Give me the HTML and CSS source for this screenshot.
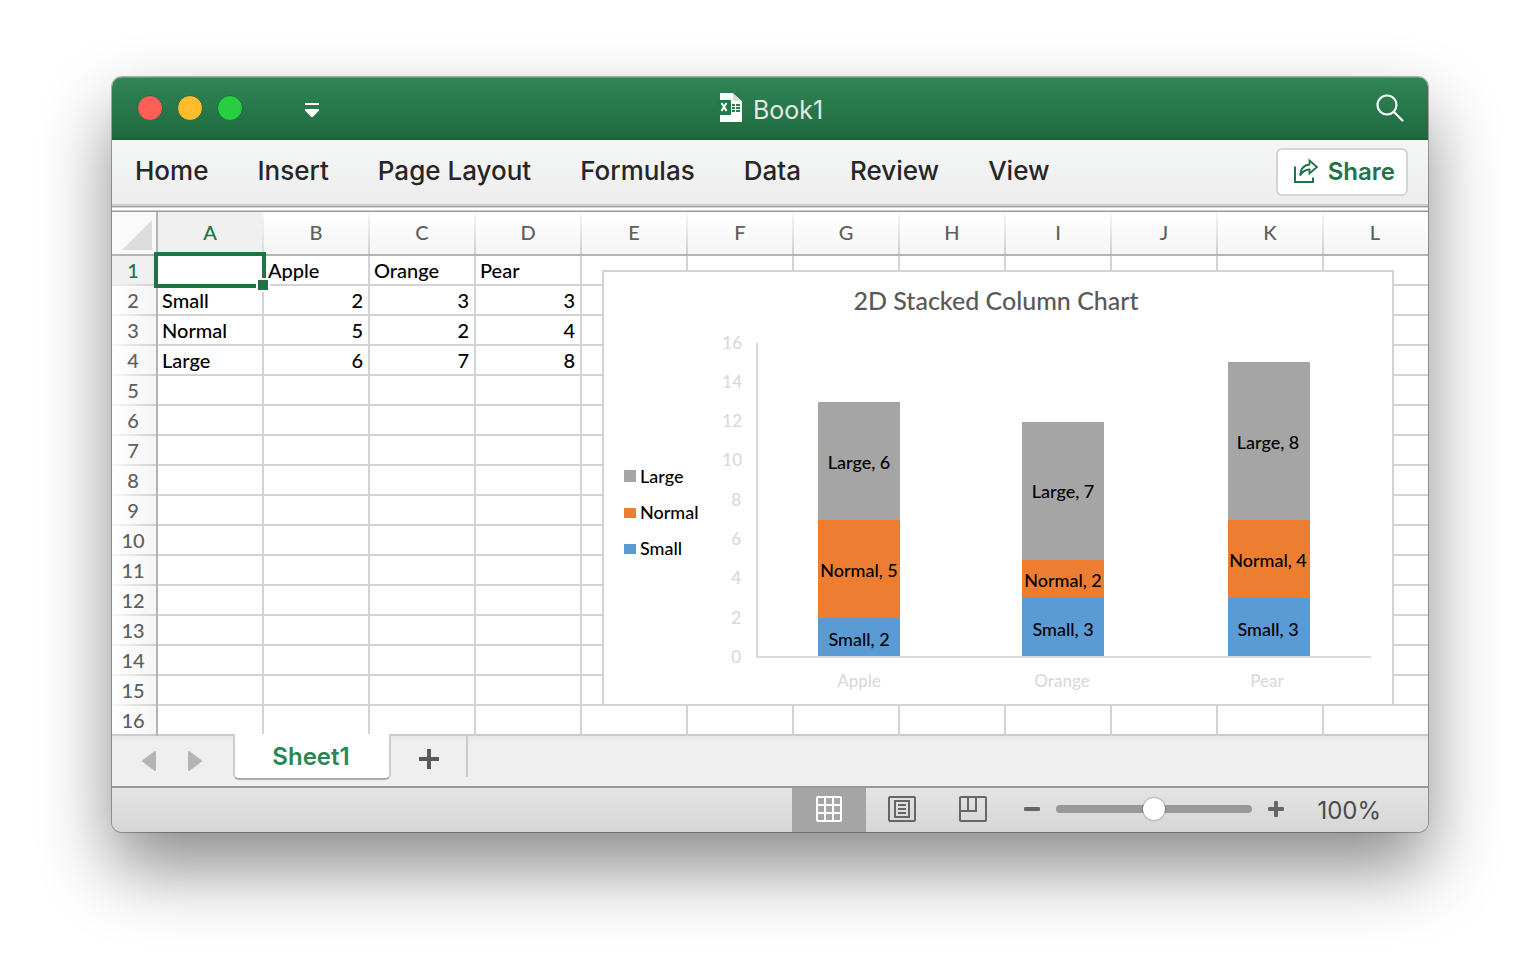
FILE: index.html
```html
<!DOCTYPE html>
<html lang="en">
<head>
<meta charset="utf-8">
<title>Book1</title>
<link rel="stylesheet" href="styles.css">
</head>
<body>
<main class="window">
  <header class="titlebar">
    <div class="titlebar-left">
      <div class="lights">
        <button class="light light-close" aria-label="Close"></button>
        <button class="light light-min" aria-label="Minimize"></button>
        <button class="light light-max" aria-label="Zoom window"></button>
      </div>
      <button class="plain customize" aria-label="Customize toolbar">
        <svg width="14" height="14" viewBox="0 0 14 14" fill="#fff"><path d="M0 0h14v2H0zM0 6h14v1.500L7.800 14h-1.600L0 7.500z"/></svg>
      </button>
    </div>
    <h1 class="doc-title">
      <svg class="doc-icon" width="26" height="30" viewBox="0 0 26 30">
        <path d="M3 0h13l9 8v21H3z" fill="#fff"/>
        <path d="M16 0v6q0 2 2 2h7z" fill="#d5ddd8"/>
        <path d="M16 0h9v8z" fill="#2a7a4c"/>
        <path d="M15 11h3v2h-3zM19 11h4v2h-4zM15 14h3v2h-3zM19 14h4v2h-4zM15 17h3v2h-3zM19 17h4v2h-4z" fill="#2b7c4d"/>
        <rect x="0" y="7" width="14" height="15" rx="1" fill="#1f7a48"/>
        <path d="M4.500 10l5 8M9.500 10l-5 8" stroke="#fff" stroke-width="2"/>
      </svg>
      Book1
    </h1>
    <button class="plain search" aria-label="Search">
      <svg width="28" height="28" viewBox="0 0 28 28" fill="none" stroke="#fff" stroke-width="2.200" stroke-linecap="round"><circle cx="11" cy="11" r="9.500"/><path d="M18 18l8.500 8.500"/></svg>
    </button>
  </header>

  <nav class="ribbon">
    <div class="ribbon-tabs">
      <button class="ribbon-tab">Home</button>
      <button class="ribbon-tab">Insert</button>
      <button class="ribbon-tab">Page Layout</button>
      <button class="ribbon-tab">Formulas</button>
      <button class="ribbon-tab">Data</button>
      <button class="ribbon-tab">Review</button>
      <button class="ribbon-tab">View</button>
    </div>
    <button class="share">
      <svg width="26" height="26" viewBox="0 0 26 26" fill="none" stroke="#217346" stroke-width="2"><path d="M2 8.500V24h18v-4.500"/><path d="M7 17.500C7.500 11 11 7 16.500 6.500V2.500L24 9l-7.500 6.500v-4C12 11.500 9.500 13.500 7 17.500z" stroke-width="1.800"/></svg>
      Share
    </button>
  </nav>
  <div class="rule"></div>

  <section class="sheet">
    <table class="grid">
      <colgroup><col class="col-head"><col class="col"><col class="col"><col class="col"><col class="col"><col class="col"><col class="col"><col class="col"><col class="col"><col class="col"><col class="col"><col class="col"><col></colgroup>
      <thead>
        <tr><th class="corner"><svg width="30" height="30" viewBox="0 0 30 30"><path d="M30 0v30H0z" fill="#dcdcdc"/></svg></th><th class="current">A</th><th>B</th><th>C</th><th>D</th><th>E</th><th>F</th><th>G</th><th>H</th><th>I</th><th>J</th><th>K</th><th>L</th></tr>
      </thead>
      <tbody>
        <tr><th class="current">1</th><td class="selected"><span class="selection"></span></td><td>Apple</td><td>Orange</td><td>Pear</td><td></td><td></td><td></td><td></td><td></td><td></td><td></td><td></td></tr>
        <tr><th>2</th><td>Small</td><td class="num">2</td><td class="num">3</td><td class="num">3</td><td></td><td></td><td></td><td></td><td></td><td></td><td></td><td></td></tr>
        <tr><th>3</th><td>Normal</td><td class="num">5</td><td class="num">2</td><td class="num">4</td><td></td><td></td><td></td><td></td><td></td><td></td><td></td><td></td></tr>
        <tr><th>4</th><td>Large</td><td class="num">6</td><td class="num">7</td><td class="num">8</td><td></td><td></td><td></td><td></td><td></td><td></td><td></td><td></td></tr>
        <tr><th>5</th><td></td><td></td><td></td><td></td><td></td><td></td><td></td><td></td><td></td><td></td><td></td><td></td></tr>
        <tr><th>6</th><td></td><td></td><td></td><td></td><td></td><td></td><td></td><td></td><td></td><td></td><td></td><td></td></tr>
        <tr><th>7</th><td></td><td></td><td></td><td></td><td></td><td></td><td></td><td></td><td></td><td></td><td></td><td></td></tr>
        <tr><th>8</th><td></td><td></td><td></td><td></td><td></td><td></td><td></td><td></td><td></td><td></td><td></td><td></td></tr>
        <tr><th>9</th><td></td><td></td><td></td><td></td><td></td><td></td><td></td><td></td><td></td><td></td><td></td><td></td></tr>
        <tr><th>10</th><td></td><td></td><td></td><td></td><td></td><td></td><td></td><td></td><td></td><td></td><td></td><td></td></tr>
        <tr><th>11</th><td></td><td></td><td></td><td></td><td></td><td></td><td></td><td></td><td></td><td></td><td></td><td></td></tr>
        <tr><th>12</th><td></td><td></td><td></td><td></td><td></td><td></td><td></td><td></td><td></td><td></td><td></td><td></td></tr>
        <tr><th>13</th><td></td><td></td><td></td><td></td><td></td><td></td><td></td><td></td><td></td><td></td><td></td><td></td></tr>
        <tr><th>14</th><td></td><td></td><td></td><td></td><td></td><td></td><td></td><td></td><td></td><td></td><td></td><td></td></tr>
        <tr><th>15</th><td></td><td></td><td></td><td></td><td></td><td></td><td></td><td></td><td></td><td></td><td></td><td></td></tr>
        <tr><th>16</th><td></td><td></td><td></td><td></td><td></td><td></td><td></td><td></td><td></td><td></td><td></td><td></td></tr>
      </tbody>
    </table>

    <svg class="chart" width="792" height="436" viewBox="0 0 792 436" role="img" aria-label="2D Stacked Column Chart">
      <rect x="1" y="1" width="790" height="434" fill="#fff" stroke="#d3d3d3" stroke-width="2"/>
      <text class="chart-title" x="394" y="40">2D Stacked Column Chart</text>
      <g class="ticks">
        <text x="140" y="79">16</text><text x="140" y="118">14</text><text x="140" y="157">12</text>
        <text x="140" y="196">10</text><text x="139" y="236">8</text><text x="139" y="275">6</text>
        <text x="139" y="314">4</text><text x="139" y="354">2</text><text x="139" y="393">0</text>
      </g>
      <path d="M155 73v314h614" fill="none" stroke="#d9d9d9" stroke-width="2"/>
      <g fill="#a5a5a5"><rect x="216" y="132" width="82" height="118"/><rect x="420" y="152" width="82" height="138"/><rect x="626" y="92" width="82" height="158"/><rect x="22" y="200" width="12" height="12"/></g>
      <g fill="#ed7d31"><rect x="216" y="250" width="82" height="98"/><rect x="420" y="290" width="82" height="38"/><rect x="626" y="250" width="82" height="78"/><rect x="22" y="238" width="12" height="10"/></g>
      <g fill="#5b9bd5"><rect x="216" y="348" width="82" height="38"/><rect x="420" y="328" width="82" height="58"/><rect x="626" y="328" width="82" height="58"/><rect x="22" y="274" width="12" height="10"/></g>
      <g class="legend">
        <text x="38" y="213">Large</text><text x="38" y="249">Normal</text><text x="38" y="285">Small</text>
      </g>
      <g class="labels">
        <text x="257" y="199">Large, 6</text><text x="257" y="307">Normal, 5</text><text x="257" y="376">Small, 2</text>
        <text x="461" y="228">Large, 7</text><text x="461" y="317">Normal, 2</text><text x="461" y="366">Small, 3</text>
        <text x="666" y="179">Large, 8</text><text x="666" y="297">Normal, 4</text><text x="666" y="366">Small, 3</text>
      </g>
      <g class="categories">
        <text x="257" y="417">Apple</text><text x="460" y="417">Orange</text><text x="665" y="417">Pear</text>
      </g>
    </svg>
  </section>

  <nav class="tabbar">
    <div class="tab-nav">
      <button class="plain" aria-label="Previous sheet"><svg width="14" height="20" viewBox="0 0 14 20"><path d="M13 1v18L1 10z" fill="#b4b4b4" stroke="#b4b4b4" stroke-width="2" stroke-linejoin="round"/></svg></button>
      <button class="plain" aria-label="Next sheet"><svg width="14" height="20" viewBox="0 0 14 20"><path d="M1 1v18l12-9z" fill="#b4b4b4" stroke="#b4b4b4" stroke-width="2" stroke-linejoin="round"/></svg></button>
    </div>
    <button class="sheet-tab">Sheet1</button>
    <button class="add-sheet" aria-label="Add sheet"><svg width="20" height="20" viewBox="0 0 20 20"><path d="M10 0v20M0 10h20" stroke="#5a5a5a" stroke-width="4"/></svg></button>
  </nav>

  <footer class="status">
    <button class="view view-active" aria-label="Normal view"><svg width="26" height="26" viewBox="0 0 26 26" fill="none" stroke="#fff" stroke-width="2"><rect x="1" y="1" width="24" height="24" rx="1"/><path d="M9 1v24M17 1v24M1 9h24M1 17h24"/></svg></button>
    <button class="view" aria-label="Page layout view"><svg width="28" height="26" viewBox="0 0 28 26" fill="none" stroke="#666" stroke-width="2"><rect x="1" y="1" width="26" height="24" rx="1"/><path d="M7 5h14v16H7zM10 9h8M10 13h8M10 17h8"/></svg></button>
    <button class="view" aria-label="Page break preview"><svg width="28" height="26" viewBox="0 0 28 26" fill="none" stroke="#666" stroke-width="2"><rect x="1" y="1" width="26" height="24" rx="1"/><path d="M9 1v14M17 1v14M1 15h17"/></svg></button>
    <div class="zoom">
      <button class="plain" aria-label="Zoom out"><svg width="16" height="16" viewBox="0 0 16 16"><rect y="6" width="16" height="4" rx="1" fill="#666"/></svg></button>
      <input class="slider" type="range" min="0" max="200" value="100" aria-label="Zoom">
      <button class="plain" aria-label="Zoom in"><svg width="16" height="16" viewBox="0 0 16 16" fill="#666"><rect y="6" width="16" height="4" rx="1"/><rect x="6" width="4" height="16" rx="1"/></svg></button>
    </div>
    <output class="zoom-value">100%</output>
  </footer>
</main>
</body>
</html>
```
FILE: styles.css
```css
* { box-sizing: border-box; }

body {
  min-height: 100vh;
  margin: 0;
  padding: 77px 112px 140px;
  background: #fff;
  font-family: Inter, "Liberation Sans", sans-serif;
}

button {
  margin: 0;
  padding: 0;
  border: 0;
  background: none;
  font: inherit;
  color: inherit;
}

svg { display: block; }

.plain { display: flex; }

.window {
  display: flex;
  flex-direction: column;
  overflow: hidden;
  border-radius: 10px;
  background: #fff;
  box-shadow: 0 0 0 1px rgba(0, 0, 0, .25), 0 0 2px rgba(0, 0, 0, .2), 0 36px 72px rgba(0, 0, 0, .46);
}

.titlebar {
  display: grid;
  grid-template-columns: 1fr auto 1fr;
  align-items: center;
  height: 63px;
  padding: 0 24px;
  background: linear-gradient(#308455, #1e6b3e);
  border-top: 1px solid #57a077;
  border-bottom: 2px solid #1b5f37;
}

.titlebar-left { display: flex; align-items: center; gap: 61px; padding-left: 1px; }
.lights { display: flex; gap: 14px; }
.light { width: 26px; height: 26px; border: 1px solid #1f6a3f; border-radius: 50%; }
.light-close { background: #ff5f57; }
.light-min { background: #ffbd2e; }
.light-max { background: #28cd41; }
.customize { padding: 4px 1px 0; }

.doc-title {
  display: flex;
  align-items: center;
  gap: 10px;
  margin: 0;
  padding-top: 4px;
  font-size: 25px;
  font-weight: 400;
  line-height: 30px;
  color: #e4e9e6;
}

.doc-icon { margin-bottom: 4px; }
.search { justify-self: end; }

.ribbon {
  display: flex;
  align-items: center;
  justify-content: space-between;
  height: 64px;
  padding: 0 20px 0 23px;
  background: linear-gradient(#f5f6f6, #ededed);
}

.ribbon-tabs { display: flex; gap: 49px; padding-bottom: 2px; }
.ribbon-tab { font-size: 26px; font-weight: 500; line-height: 30px; color: #262626; }

.share {
  display: flex;
  align-items: center;
  gap: 9px;
  height: 48px;
  padding: 0 11px 2px 15px;
  border: 2px solid #d4d4d4;
  border-radius: 6px;
  background: #fff;
  font-size: 24px;
  font-weight: 600;
  color: #217346;
}

.rule {
  height: 8px;
  border-top: 2px solid #cdcdcd;
  border-bottom: 1px solid #999;
  background: linear-gradient(#a0a0a0 1px, #d6d6d6 1px 2px, #fff 2px 4px, #ccc 4px);
}

.sheet {
  position: relative;
  overflow: hidden;
  font-family: "Lato Medium", Lato, Carlito, "Liberation Sans", sans-serif;
  font-size: 20px;
  font-weight: 500;
}

.grid { width: 100%; table-layout: fixed; border-collapse: separate; border-spacing: 0; }
.col-head { width: 46px; }
.col { width: 106px; }
.grid th, .grid td { height: 30px; padding: 0; line-height: 28px; white-space: nowrap; }
.grid th { padding: 0 2px 2px 0; font-weight: 500; color: #5f5f5f; text-align: center; }

.grid td {
  padding: 0 4px;
  border-right: 2px solid #d3d3d3;
  border-bottom: 2px solid #d3d3d3;
  color: #000;
}

.grid tr > :last-child { border-right: 0; }
.grid td.num { padding-right: 5px; text-align: right; }

.grid thead th {
  height: 44px;
  border-bottom: 2px solid #b4b4b4;
  background:
    linear-gradient(#f8f8f8, #d0d0d0) right / 2px 100% no-repeat,
    linear-gradient(#fff, #f5f5f5);
}

.grid thead th:last-child { background: linear-gradient(#fff, #f5f5f5); }

.grid thead .current {
  background: linear-gradient(#f8f8f8, #d8d8d8) right / 2px 100% no-repeat, #f0f0f0;
  color: #217346;
}

.grid thead .corner { padding: 0; border-right: 2px solid #b4b4b4; background: #fafafa; }
.corner svg { margin: 4px 0 0 10px; }

.grid tbody th {
  border-right: 2px solid #b4b4b4;
  background:
    linear-gradient(to right, #f8f8f8, #d0d0d0) bottom / 100% 2px no-repeat,
    linear-gradient(to right, #fff, #f5f5f5);
}

.grid tbody .current {
  background: linear-gradient(to right, #f0f0f0, #d0d0d0) bottom / 100% 2px no-repeat, #f0f0f0;
  color: #217346;
}

.grid tbody tr:last-child th { background: linear-gradient(#ccc, #ccc) bottom / 100% 2px no-repeat, linear-gradient(to right, #fff, #f5f5f5); }
.grid tbody tr:last-child td { border-bottom-color: #ccc; }

.selected { position: relative; }

.selection {
  position: absolute;
  inset: -4px;
  border: 4px solid #217346;
}

.selection::after {
  content: "";
  position: absolute;
  right: -6px;
  bottom: -6px;
  width: 10px;
  height: 10px;
  background: #217346;
  box-shadow: 0 0 0 2px #fff;
}

.chart { position: absolute; left: 490px; top: 58px; font-size: 18px; }
.chart-title { font-size: 25px; fill: #595959; text-anchor: middle; }
.ticks { font-size: 17px; fill: #d9d9d9; text-anchor: end; }
.categories { font-size: 17px; fill: #d9d9d9; text-anchor: middle; }
.labels { text-anchor: middle; }

.tabbar {
  display: flex;
  height: 50px;
  background: linear-gradient(#e8e8e8, #efefef 8px);
}

.tab-nav { display: flex; align-items: center; gap: 32px; padding: 0 30px; width: 121px; }

.sheet-tab {
  z-index: 1;
  width: 158px;
  height: 46px;
  margin-top: -2px;
  padding: 0 2px 0 0;
  border: 2px solid #ccc;
  border-top: 0;
  border-bottom-color: #aaa;
  border-radius: 0 0 6px 6px;
  background: #fff;
  font-size: 24px;
  font-weight: 600;
  color: #2a8753;
}

.add-sheet {
  display: flex;
  align-items: center;
  justify-content: center;
  width: 77px;
  height: 41px;
  padding-top: 5px;
  border-right: 2px solid #ccc;
}

.status {
  display: flex;
  align-items: center;
  justify-content: flex-end;
  height: 46px;
  padding-right: 47px;
  border-top: 2px solid #999;
  background: linear-gradient(#e4e4e4, #d6d6d6);
  color: #4a4a4a;
}

.view { display: flex; align-items: center; justify-content: center; width: 71px; height: 44px; padding-bottom: 2px; }
.view-active { width: 74px; background: #a5a5a5; }
.zoom { display: flex; align-items: center; gap: 16px; margin: 0 33px 0 16px; padding-bottom: 2px; }

.slider {
  appearance: none;
  width: 196px;
  height: 24px;
  margin: 0;
  background: none;
}

.slider::-webkit-slider-runnable-track { height: 8px; border-radius: 4px; background: #999; }

.slider::-webkit-slider-thumb {
  appearance: none;
  width: 22px;
  height: 22px;
  margin-top: -7px;
  border-radius: 50%;
  background: #fff;
  box-shadow: 0 0 2px rgba(0, 0, 0, .6);
}

.zoom-value { padding-top: 2px; font-size: 24px; line-height: 30px; }
```
